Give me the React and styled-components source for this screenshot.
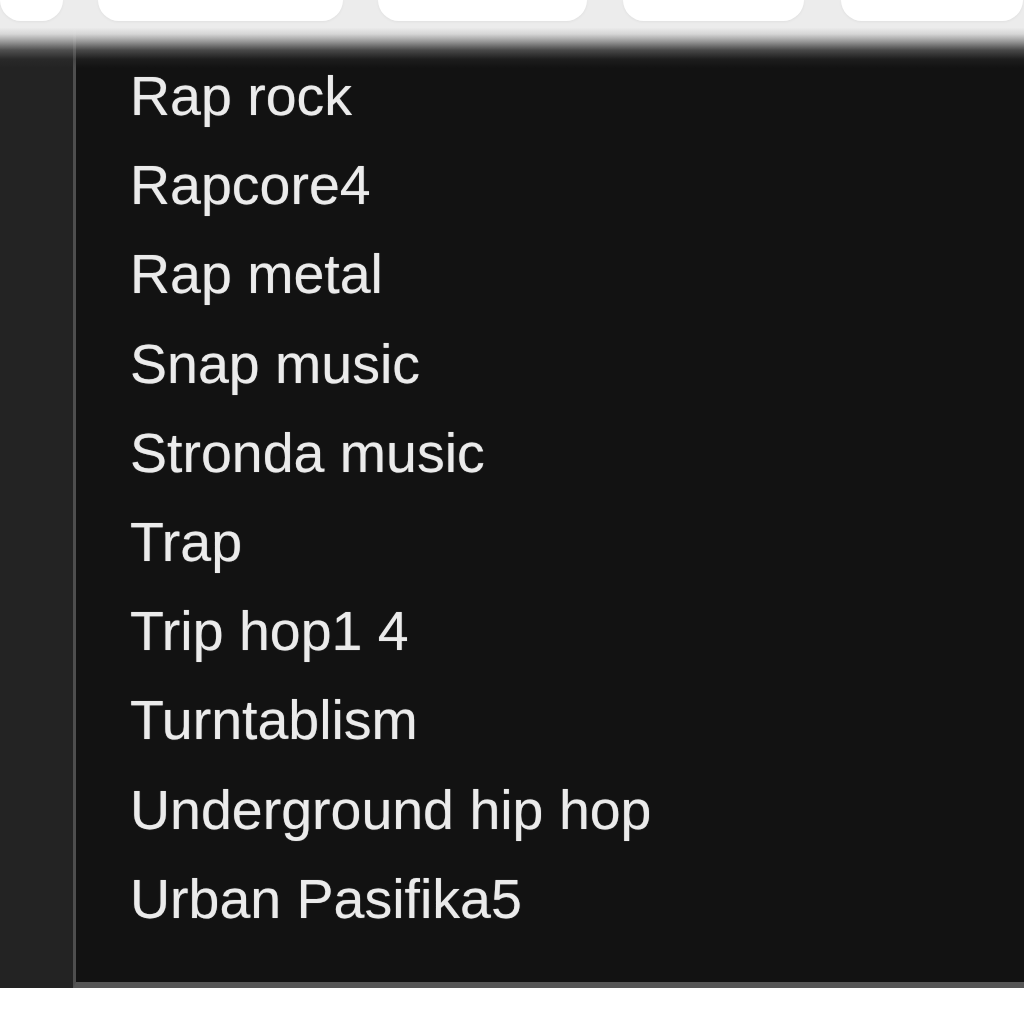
import React from 'react'
import styled, { createGlobalStyle } from 'styled-components'

const GlobalStyle = createGlobalStyle`
  html, body {
    margin: 0;
    padding: 0;
    background: #ffffff;
  }
  body {
    font-family: "Liberation Sans", Arial, Helvetica, sans-serif;
  }
`

const Page = styled.div`
  width: 1024px;
  height: 1024px;
  overflow: hidden;
  background: #ffffff;
`

const TabStrip = styled.div`
  height: 28px;
  background: #ececec;
  display: flex;
  gap: 35px;
  overflow: hidden;
`

const Tab = styled.div`
  flex: none;
  width: ${p => p.width}px;
  height: 21px;
  margin-left: ${p => p.offset || 0}px;
  background: #ffffff;
  border-radius: 0 0 ${p => p.radius || 24}px ${p => p.radius || 24}px;
  box-shadow: 0 1px 3px rgba(0, 0, 0, 0.05);
`

const Main = styled.div`
  position: relative;
  display: flex;
  height: 960px;
`

const Fade = styled.div`
  position: absolute;
  left: 0;
  right: 0;
  top: 0;
  height: 40px;
  pointer-events: none;
  background: linear-gradient(
    to bottom,
    rgba(234, 234, 234, 1) 0%,
    rgba(220, 220, 220, 0.97) 15%,
    rgba(170, 170, 170, 0.85) 35%,
    rgba(110, 110, 110, 0.6) 55%,
    rgba(55, 55, 55, 0.3) 78%,
    rgba(18, 18, 18, 0) 100%
  );
`

const Sidebar = styled.div`
  flex: none;
  width: 73px;
  background: #232323;
`

const Panel = styled.div`
  flex: 1;
  background: #121212;
  border-left: 3px solid #4e4e4e;
  border-bottom: 6px solid #555555;
  padding: 24px 0 0 54px;
`

const GenreList = styled.ul`
  list-style: none;
  margin: 0;
  padding: 0;
`

const Genre = styled.li`
  height: 89.2px;
  line-height: 89.2px;
  font-size: 55.5px;
  color: #ebebeb;
  white-space: nowrap;
  text-shadow: 0 0 1px rgba(235, 235, 235, 0.6);
`

const tabs = [
  { width: 63, offset: 0, radius: 26 },
  { width: 245 },
  { width: 209 },
  { width: 181, offset: 1 },
  { width: 182, offset: 2 },
]

const genres = [
  'Rap rock',
  'Rapcore4',
  'Rap metal',
  'Snap music',
  'Stronda music',
  'Trap',
  'Trip hop1 4',
  'Turntablism',
  'Underground hip hop',
  'Urban Pasifika5',
]

export default function App() {
  return (
    <Page>
      <GlobalStyle />
      <TabStrip>
        {tabs.map((t, i) => (
          <Tab key={i} width={t.width} offset={t.offset} radius={t.radius} />
        ))}
      </TabStrip>
      <Main>
        <Sidebar />
        <Panel>
          <GenreList>
            {genres.map(g => (
              <Genre key={g}>{g}</Genre>
            ))}
          </GenreList>
        </Panel>
        <Fade />
      </Main>
    </Page>
  )
}
